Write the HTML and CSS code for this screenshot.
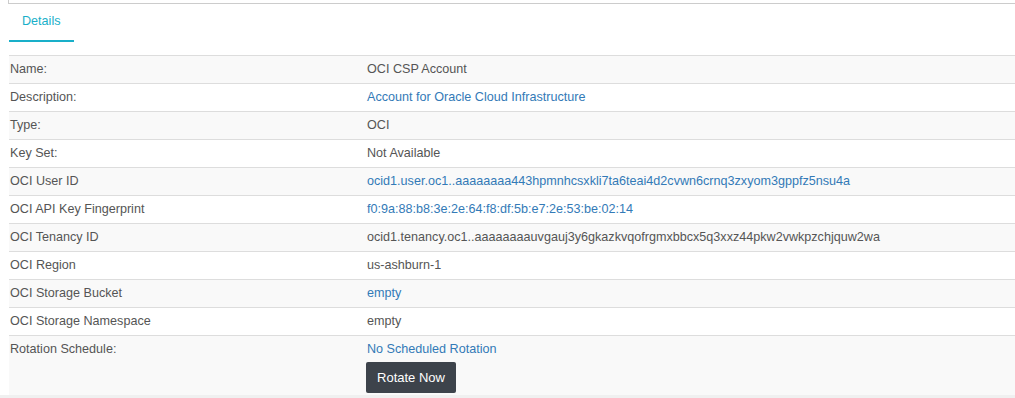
FILE: index.html
```html
<!DOCTYPE html>
<html lang="en">
<head>
    <meta charset="UTF-8">
    <meta name="viewport" content="width=device-width, initial-scale=1.0">
    <title>OCI CSP Account</title>
    <link rel="stylesheet" href="styles.css">
</head>
<body>
    <div class="top-box"></div>
    <ul class="tabs">
        <li class="tab active">Details</li>
    </ul>
    <table class="details">
        <tr>
            <td class="label">Name:</td>
            <td class="value">OCI CSP Account</td>
        </tr>
        <tr>
            <td class="label">Description:</td>
            <td class="value"><a href="#">Account for Oracle Cloud Infrastructure</a></td>
        </tr>
        <tr>
            <td class="label">Type:</td>
            <td class="value">OCI</td>
        </tr>
        <tr>
            <td class="label">Key Set:</td>
            <td class="value">Not Available</td>
        </tr>
        <tr>
            <td class="label">OCI User ID</td>
            <td class="value"><a href="#">ocid1.user.oc1..aaaaaaaa443hpmnhcsxkli7ta6teai4d2cvwn6crnq3zxyom3gppfz5nsu4a</a></td>
        </tr>
        <tr>
            <td class="label">OCI API Key Fingerprint</td>
            <td class="value"><a href="#">f0:9a:88:b8:3e:2e:64:f8:df:5b:e7:2e:53:be:02:14</a></td>
        </tr>
        <tr>
            <td class="label">OCI Tenancy ID</td>
            <td class="value">ocid1.tenancy.oc1..aaaaaaaauvgauj3y6gkazkvqofrgmxbbcx5q3xxz44pkw2vwkpzchjquw2wa</td>
        </tr>
        <tr>
            <td class="label">OCI Region</td>
            <td class="value">us-ashburn-1</td>
        </tr>
        <tr>
            <td class="label">OCI Storage Bucket</td>
            <td class="value"><a href="#">empty</a></td>
        </tr>
        <tr>
            <td class="label">OCI Storage Namespace</td>
            <td class="value">empty</td>
        </tr>
        <tr class="last">
            <td class="label">Rotation Schedule:</td>
            <td class="value">
                <a href="#">No Scheduled Rotation</a>
                <button class="rotate-button">Rotate Now</button>
            </td>
        </tr>
    </table>
    <div class="footer-strip"></div>
</body>
</html>
```
FILE: styles.css
```css
body {
    margin: 0;
    font-family: 'Liberation Sans', Arial, sans-serif;
    font-size: 12.6px;
    line-height: 18px;
    color: #555;
    background: white;
    overflow: hidden;
}
.top-box {
    height: 3px;
    margin-left: 8px;
    border-left: 1px solid #ccc;
    border-bottom: 1px solid #ccc;
}
.tabs {
    list-style: none;
    margin: 0 0 13px 9px;
    padding: 0;
    display: flex;
}
.tab {
    padding: 8px 13px 10px;
    color: #19afc9;
}
.tab.active {
    border-bottom: 2px solid #19afc9;
}
.details {
    margin-left: 9px;
    width: calc(100% - 9px);
    border-collapse: collapse;
}
.details td {
    border-top: 1px solid #ddd;
    padding: 4px 1px 5px;
    vertical-align: top;
    text-align: left;
}
.details tr:nth-child(odd) {
    background-color: #f9f9f9;
}
.details td.label {
    width: 355px;
    color: #555;
}
.details a {
    color: #337ab7;
    text-decoration: none;
}
.details tr.last td {
    padding-bottom: 2px;
}
.rotate-button {
    display: block;
    margin: 4px 0 0 -1px;
    width: 90px;
    height: 31px;
    background-color: #3d434b;
    color: white;
    border: none;
    border-radius: 2px;
    font-family: 'Liberation Sans', Arial, sans-serif;
    font-size: 13px;
    cursor: pointer;
}
.footer-strip {
    height: 10px;
    background-color: #f0f0f0;
}
```
